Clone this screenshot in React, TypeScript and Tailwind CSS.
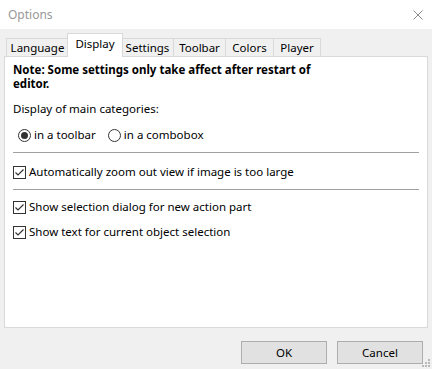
import React from "react";

const font = { fontFamily: '"Noto Sans", "Segoe UI", sans-serif' };

function Radio({ checked, label }: { checked?: boolean; label: string }) {
  return (
    <div className="flex items-center">
      <div className="w-[13px] h-[13px] rounded-full border border-[#333333] bg-white flex items-center justify-center">
        {checked && <div className="w-[7px] h-[7px] rounded-full bg-[#333333]" />}
      </div>
      <span className="ml-[3px]">{label}</span>
    </div>
  );
}

function Check({ label }: { label: string }) {
  return (
    <div className="flex items-center">
      <div className="w-[13px] h-[13px] border border-[#333333] bg-white flex items-center justify-center">
        <svg width="11" height="11" viewBox="0 0 11 11">
          <path d="M1.5 5.5 L4 8 L9.5 2.5" fill="none" stroke="#333333" strokeWidth="1.2" />
        </svg>
      </div>
      <span className="ml-[3px]">{label}</span>
    </div>
  );
}

const tabs = [
  { name: "Language", w: "w-[63px]", ml: "ml-0" },
  { name: "Display", w: "w-[56px]", ml: "-ml-[2px]", sel: true },
  { name: "Settings", w: "w-[53px]", ml: "-ml-[2px]" },
  { name: "Toolbar", w: "w-[53px]", ml: "-ml-[1px]" },
  { name: "Colors", w: "w-[49px]", ml: "-ml-[1px]" },
  { name: "Player", w: "w-[48px]", ml: "-ml-[1px]" },
];

export default function App() {
  return (
    <div className="w-[432px] h-[369px] bg-[#f0f0f0] flex flex-col text-[11.5px] text-black relative overflow-hidden" style={font}>
      <div className="h-[29px] bg-white flex items-center justify-between pl-[8px] pr-[9px] shrink-0">
        <span className="text-[#999999] text-[12px]">Options</span>
        <svg width="10" height="10" viewBox="0 0 10 10">
          <path d="M0.5 0.5 L9.5 9.5 M9.5 0.5 L0.5 9.5" stroke="#8a8a8a" strokeWidth="1" />
        </svg>
      </div>
      <div className="flex items-end h-[27px] pl-[6px] shrink-0">
        {tabs.map((t) =>
          t.sel ? (
            <div key={t.name} className={`${t.w} ${t.ml} h-[24px] -mb-px relative z-10 bg-white border border-b-0 border-[#d9d9d9] flex items-center justify-center pb-[3px]`}>
              {t.name}
            </div>
          ) : (
            <div key={t.name} className={`${t.w} ${t.ml} h-[18px] bg-[#f0f0f0] border border-b-0 border-[#d9d9d9] flex items-center justify-center`}>
              {t.name}
            </div>
          )
        )}
      </div>
      <div className="mx-[4px] h-[272px] bg-white border border-[#d9d9d9] shrink-0 px-[8px] pt-[6px] leading-[14px]">
        <div className="font-bold">
          Note: Some settings only take affect after restart of
          <br />
          editor.
        </div>
        <div className="mt-[11px]">Display of main categories:</div>
        <div className="flex items-center mt-[12px] pl-[5px] h-[14px]">
          <Radio checked label="in a toolbar" />
          <div className="ml-[12px]">
            <Radio label="in a combobox" />
          </div>
        </div>
        <div className="mt-[10px] h-px bg-[#a0a0a0]" />
        <div className="mt-[12px] h-[14px] flex items-center">
          <Check label="Automatically zoom out view if image is too large" />
        </div>
        <div className="mt-[10px] h-px bg-[#a0a0a0]" />
        <div className="mt-[10px] h-[14px] flex items-center">
          <Check label="Show selection dialog for new action part" />
        </div>
        <div className="mt-[11px] h-[14px] flex items-center">
          <Check label="Show text for current object selection" />
        </div>
      </div>
      <div className="flex justify-end gap-[10px] pr-[9px] pt-[13px]">
        <button className="w-[86px] h-[23px] bg-[#e1e1e1] border border-[#adadad] flex items-center justify-center">OK</button>
        <button className="w-[86px] h-[23px] bg-[#e1e1e1] border border-[#adadad] flex items-center justify-center">Cancel</button>
      </div>
      <svg className="absolute right-[1px] bottom-[1px]" width="10" height="10" viewBox="0 0 10 10">
        <rect x="7" y="1" width="2" height="2" fill="#b8b8b8" />
        <rect x="4" y="4" width="2" height="2" fill="#b8b8b8" />
        <rect x="7" y="4" width="2" height="2" fill="#b8b8b8" />
        <rect x="1" y="7" width="2" height="2" fill="#b8b8b8" />
        <rect x="4" y="7" width="2" height="2" fill="#b8b8b8" />
        <rect x="7" y="7" width="2" height="2" fill="#b8b8b8" />
      </svg>
    </div>
  );
}
